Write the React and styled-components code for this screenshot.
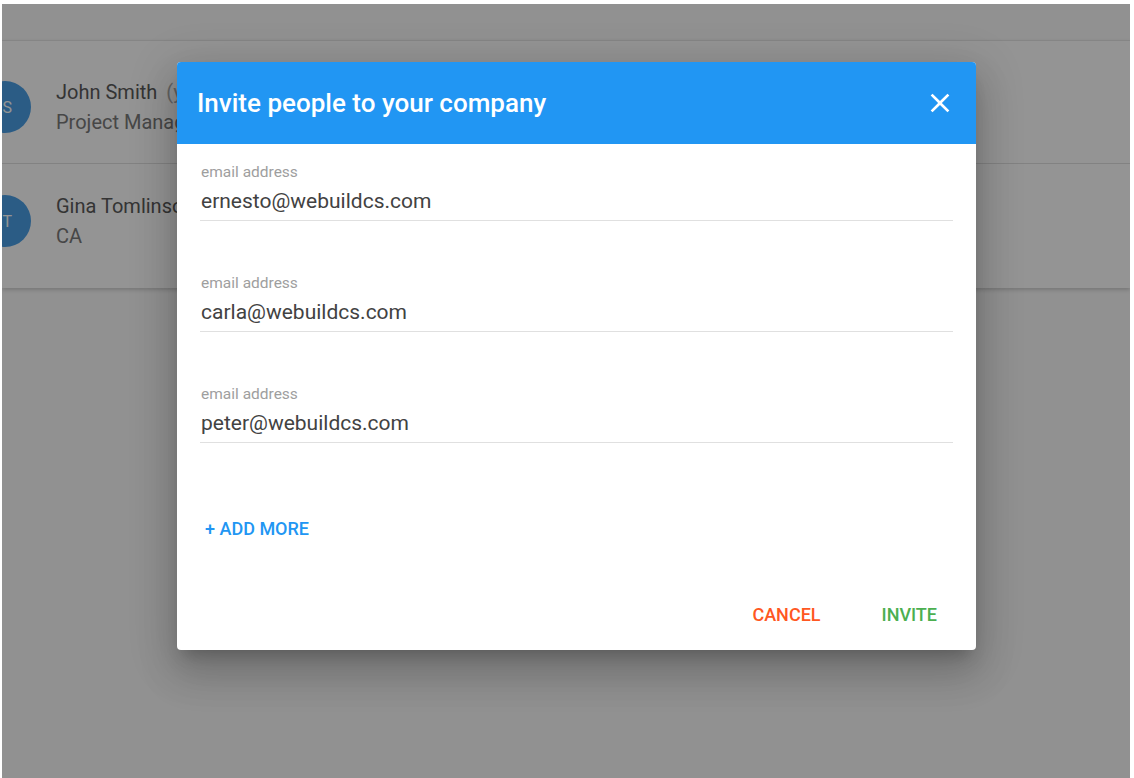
import React from 'react';
import styled, { createGlobalStyle } from 'styled-components';

const GlobalStyle = createGlobalStyle`
  html, body { margin: 0; padding: 0; background: #fff; }
  body { font-family: Roboto, "Noto Sans", "Liberation Sans", sans-serif; }
`;

const Frame = styled.div`
  position: relative;
  margin: 4px 4px 0 2px;
  height: 774px;
  overflow: hidden;
  background: #fafafa;
`;

const TopBand = styled.div`
  height: 36px;
`;

const ListCard = styled.div`
  background: #fff;
  border-top: 1px solid #e6e6e6;
  box-shadow: 0 2px 4px rgba(0, 0, 0, 0.18);
`;

const Row = styled.div`
  display: flex;
  align-items: flex-start;
  gap: 25px;
  height: ${p => p.h}px;
  box-sizing: border-box;
  padding-top: ${p => p.top}px;
  border-bottom: ${p => (p.last ? 'none' : '1px solid #e0e0e0')};
`;

const Avatar = styled.div`
  width: 52px;
  height: 52px;
  margin: 4px 0 0 -23px;
  border-radius: 50%;
  background: #4a9fe6;
  color: #fff;
  font-size: 16px;
  display: flex;
  align-items: center;
  justify-content: flex-end;
  padding-right: 19px;
  box-sizing: border-box;
  flex-shrink: 0;
`;

const PersonText = styled.div`
  display: flex;
  flex-direction: column;
`;

const Name = styled.div`
  font-size: 20px;
  line-height: 30px;
  color: #5a5a5a;
  white-space: nowrap;
  span { color: #aaa; margin-left: 9px; }
`;

const Role = styled.div`
  font-size: 20px;
  line-height: 30px;
  color: #7a7a7a;
  white-space: nowrap;
`;

const Overlay = styled.div`
  position: absolute;
  inset: 0;
  background: rgba(0, 0, 0, 0.42);
  display: flex;
  align-items: flex-start;
  padding: 58px 0 0 175px;
`;

const Dialog = styled.div`
  width: 799px;
  background: #fff;
  border-radius: 4px;
  overflow: hidden;
  box-shadow: 0 11px 15px -7px rgba(0, 0, 0, 0.2), 0 24px 38px 3px rgba(0, 0, 0, 0.14),
    0 9px 46px 8px rgba(0, 0, 0, 0.12);
`;

const Header = styled.div`
  height: 82px;
  background: #2196f3;
  display: flex;
  align-items: center;
  justify-content: space-between;
  padding: 0 20px;
`;

const Title = styled.h2`
  margin: 0;
  color: #fff;
  font-size: 26px;
  font-weight: 500;
`;

const CloseButton = styled.button`
  border: 0;
  background: none;
  padding: 0;
  display: flex;
  cursor: pointer;
`;

const Body = styled.div`
  padding: 20px 23px 16px;
`;

const Field = styled.label`
  display: block;
  margin-bottom: 54px;
`;

const FieldLabel = styled.div`
  font-size: 15.5px;
  line-height: 16px;
  color: #9e9e9e;
  padding-left: 1px;
`;

const FieldInput = styled.input`
  display: block;
  width: 100%;
  box-sizing: border-box;
  margin-top: 8px;
  padding: 1px 0 7px 1px;
  border: 0;
  border-bottom: 1px solid #e0e0e0;
  outline: none;
  font-family: inherit;
  font-size: 21px;
  line-height: 24px;
  color: #424242;
`;

const TextButton = styled.button`
  border: 0;
  background: none;
  padding: 8px 16px;
  font-family: inherit;
  font-size: 18px;
  line-height: 22px;
  font-weight: 500;
  text-transform: uppercase;
  color: ${p => p.color};
  cursor: pointer;
`;

const AddMore = styled(TextButton)`
  margin: 13px 0 0 -11px;
`;

const Footer = styled.div`
  display: flex;
  justify-content: flex-end;
  gap: 29px;
  margin-top: 48px;
`;

const CloseIcon = () => (
  <svg width="32" height="32" viewBox="0 0 24 24" fill="#fff">
    <path d="M19 6.41L17.59 5 12 10.59 6.41 5 5 6.41 10.59 12 5 17.59 6.41 19 12 13.41 17.59 19 19 17.59 13.41 12z" />
  </svg>
);

const people = [
  { initials: 'JS', name: 'John Smith', extra: '(you)', role: 'Project Manager', top: 36, h: 123 },
  { initials: 'GT', name: 'Gina Tomlinson', role: 'CA', top: 27, h: 124 },
];

const emails = ['ernesto@webuildcs.com', 'carla@webuildcs.com', 'peter@webuildcs.com'];

export default function App() {
  return (
    <>
      <GlobalStyle />
      <Frame>
        <TopBand />
        <ListCard>
          {people.map((p, i) => (
            <Row key={p.name} top={p.top} h={p.h} last={i === people.length - 1}>
              <Avatar>{p.initials}</Avatar>
              <PersonText>
                <Name>
                  {p.name}
                  {p.extra && <span>{p.extra}</span>}
                </Name>
                <Role>{p.role}</Role>
              </PersonText>
            </Row>
          ))}
        </ListCard>

        <Overlay>
          <Dialog>
            <Header>
              <Title>Invite people to your company</Title>
              <CloseButton aria-label="close">
                <CloseIcon />
              </CloseButton>
            </Header>
            <Body>
              {emails.map(e => (
                <Field key={e}>
                  <FieldLabel>email address</FieldLabel>
                  <FieldInput defaultValue={e} />
                </Field>
              ))}
              <AddMore color="#2196f3">+ Add more</AddMore>
              <Footer>
                <TextButton color="#ff5722">Cancel</TextButton>
                <TextButton color="#4caf50">Invite</TextButton>
              </Footer>
            </Body>
          </Dialog>
        </Overlay>
      </Frame>
    </>
  );
}
